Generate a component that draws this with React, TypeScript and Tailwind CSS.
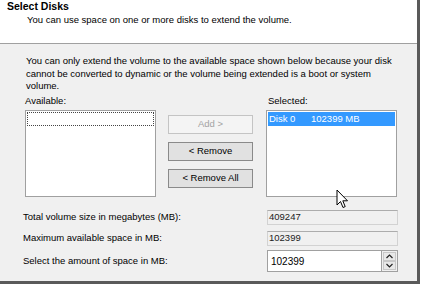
import React from "react";

function ChevronUp() {
  return (
    <svg width="7" height="5" viewBox="0 0 7 5">
      <path d="M0.5 4 L3.5 1 L6.5 4" fill="none" stroke="#222" strokeWidth="1.2" />
    </svg>
  );
}

function ChevronDown() {
  return (
    <svg width="7" height="5" viewBox="0 0 7 5">
      <path d="M0.5 1 L3.5 4 L6.5 1" fill="none" stroke="#222" strokeWidth="1.2" />
    </svg>
  );
}

function Cursor() {
  return (
    <svg width="13" height="20" viewBox="0 0 13 20" className="absolute left-[336px] top-[189px]">
      <path
        d="M1 1 L1 16 L4.5 12.5 L7 18.5 L9.2 17.6 L6.8 11.8 L11.5 11.8 Z"
        fill="#fff"
        stroke="#000"
        strokeWidth="1"
        strokeLinejoin="miter"
      />
    </svg>
  );
}

function WinButton({ label, disabled }: { label: string; disabled?: boolean }) {
  return (
    <div
      className={
        disabled
          ? "flex h-[19px] items-center justify-center border border-[#c4c4c4] bg-[#f4f4f4] text-[#a3a3a3]"
          : "flex h-[19px] items-center justify-center border border-[#8a8a8a] bg-[#e1e1e1] text-black"
      }
    >
      {label}
    </div>
  );
}

function ReadOnlyField({ value }: { value: string }) {
  return (
    <div className="flex h-[15px] items-center border border-[#d2d2d2] border-t-[#acacac] bg-[#f0f0f0] pl-[1px] text-[#222]">
      {value}
    </div>
  );
}

export default function App() {
  return (
    <div className="h-[286px] w-[422px] bg-white font-['Liberation_Sans',Arial,sans-serif] text-[9.5px] text-black">
      <div className="relative h-[284px] w-[420px] border-r-[3px] border-b-[3px] border-[#5a5a5a] bg-[#f0f0f0]">
        <div className="h-[44px] border-b border-[#a0a0a0] bg-white pl-[7px]">
          <p className="text-[10.5px] font-bold leading-[13px]">Select Disks</p>
          <p className="pl-[20px] leading-[13px]">You can use space on one or more disks to extend the volume.</p>
        </div>

        <div className="pl-[25px] pt-[11px]">
          <p className="ml-[1px] w-[372px] leading-[12.5px]">
            You can only extend the volume to the available space shown below because your disk cannot be converted
            to dynamic or the volume being extended is a boot or system volume.
          </p>

          <div className="mt-[1.5px] grid grid-cols-[131px_85px_132px] gap-x-[12px]">
            <div>
              <p className="h-[16px] leading-[13px]">Available:</p>
              <div className="h-[87px] border border-[#a0a0a0] bg-white p-[1px]">
                <div className="h-[14px] border border-dotted border-[#444]" />
              </div>
            </div>
            <div className="flex flex-col gap-[8px] pt-[21px]">
              <WinButton label="Add >" disabled />
              <WinButton label="< Remove" />
              <WinButton label="< Remove All" />
            </div>
            <div className="ml-[1px]">
              <p className="h-[16px] pl-[2px] leading-[13px]">Selected:</p>
              <div className="h-[87px] border border-[#a0a0a0] bg-white p-[1px]">
                <div className="flex h-[14px] items-center bg-[#3399ff] pl-[1px] text-white">
                  <span className="w-[42px]">Disk 0</span>
                  <span>102399 MB</span>
                </div>
              </div>
            </div>
          </div>

          <div className="-ml-[2px] mt-[13px] grid grid-cols-[244px_131px] items-center gap-y-[6px]">
            <span>Total volume size in megabytes (MB):</span>
            <ReadOnlyField value="409247" />
            <span>Maximum available space in MB:</span>
            <ReadOnlyField value="102399" />
            <span className="-mt-[2px]">Select the amount of space in MB:</span>
            <div className="-mt-[2px] flex h-[22px]">
              <div className="flex flex-1 items-center border border-[#a0a0a0] border-r-0 bg-white pl-[3px] text-[10px]">
                102399
              </div>
              <div className="flex w-[17px] flex-col border border-[#a0a0a0] bg-[#f0f0f0] p-[1px]">
                <div className="flex flex-1 items-center justify-center border border-[#c8c8c8] bg-[#e8e8e8]">
                  <ChevronUp />
                </div>
                <div className="flex flex-1 items-center justify-center border border-[#c8c8c8] bg-[#e8e8e8]">
                  <ChevronDown />
                </div>
              </div>
            </div>
          </div>
        </div>

        <Cursor />
      </div>
    </div>
  );
}
